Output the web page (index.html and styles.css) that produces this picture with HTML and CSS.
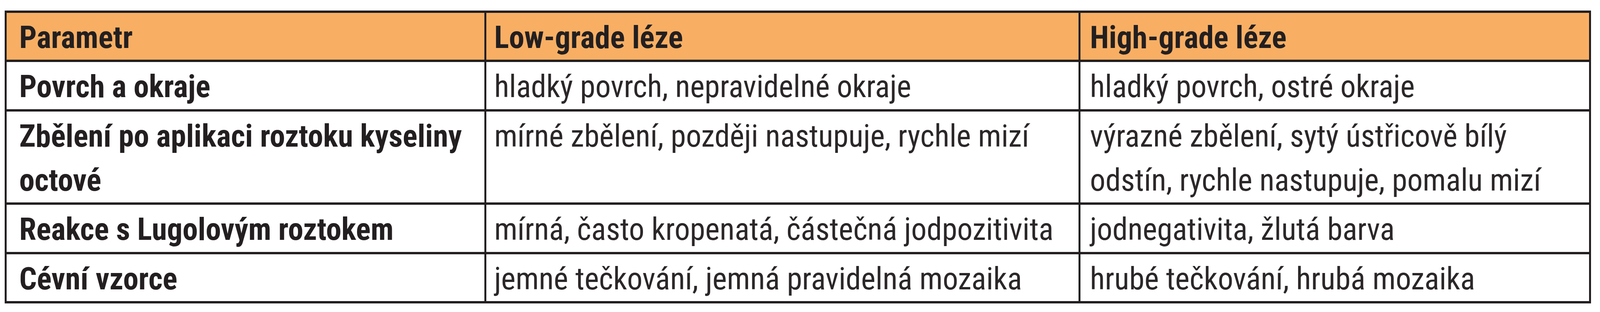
FILE: index.html
```html
<!DOCTYPE html>
<html lang="cs">
<head>
<meta charset="utf-8">
<title>Tabulka</title>
<link rel="stylesheet" href="styles.css">
</head>
<body>
<table class="grid">
  <colgroup>
    <col class="c1">
    <col class="c2">
    <col class="c3">
  </colgroup>
  <thead>
    <tr class="head">
      <th class="p1">Parametr</th>
      <th class="p2">Low-grade léze</th>
      <th class="p3">High-grade léze</th>
    </tr>
  </thead>
  <tbody>
    <tr class="r1">
      <td class="p1 lab">Povrch a okraje</td>
      <td class="p2">hladký povrch, nepravidelné okraje</td>
      <td class="p3">hladký povrch, ostré okraje</td>
    </tr>
    <tr class="r2">
      <td class="p1 lab">Zbělení po aplikaci roztoku kyseliny<br>octové</td>
      <td class="p2">mírné zbělení, později nastupuje, rychle mizí</td>
      <td class="p3">výrazné zbělení, sytý ústřicově bílý<br>odstín, rychle nastupuje, pomalu mizí</td>
    </tr>
    <tr class="r3">
      <td class="p1 lab">Reakce s Lugolovým roztokem</td>
      <td class="p2">mírná, často kropenatá, částečná jodpozitivita</td>
      <td class="p3">jodnegativita, žlutá barva</td>
    </tr>
    <tr class="r4">
      <td class="p1 lab">Cévní vzorce</td>
      <td class="p2">jemné tečkování, jemná pravidelná mozaika</td>
      <td class="p3">hrubé tečkování, hrubá mozaika</td>
    </tr>
  </tbody>
</table>
</body>
</html>
```
FILE: styles.css
```css
html, body {
  margin: 0;
  padding: 0;
  background: #ffffff;
}
body {
  font-family: "Roboto Condensed", Roboto, "Liberation Sans", sans-serif;
  color: #231f20;
}
.grid {
  margin: 27px 0 0 0.289vw;
  width: 99.154vw;
  table-layout: fixed;
  border-collapse: separate;
  border-spacing: 0;
  border-top: 6px solid #231f20;
  border-left: 5px solid #231f20;
}
.c1 { width: 30.27%; }
.c2 { width: 37.5%; }
.c3 { width: 32.23%; }
.grid th,
.grid td {
  border-right: 5px solid #231f20;
  border-bottom: 6px solid #231f20;
  padding-top: 7px;
  padding-right: 0;
  padding-bottom: 0;
  line-height: 113px;
  font-size: 79px;
  text-align: left;
  vertical-align: top;
  white-space: nowrap;
}
.grid th { font-weight: 700; color: #231f20; }
.grid td { font-weight: 400; color: #2b2728; }
.grid td.lab { font-weight: 700; color: #231f20; }
.head th { background: #f8af64; }
.r1 td, .r3 td { padding-bottom: 1px; }
.p1 { padding-left: 0.79vw; }
.p2 { padding-left: 0.5vw; }
.p3 { padding-left: 0.6vw; }
```
